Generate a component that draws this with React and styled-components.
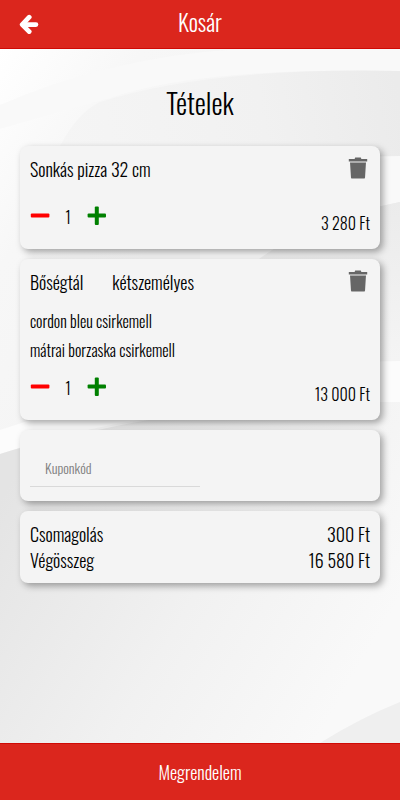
import React, { useState } from "react";
import styled, { createGlobalStyle } from "styled-components";

const GlobalStyle = createGlobalStyle`
  *, *::before, *::after { box-sizing: border-box; }
  body { margin: 0; background: #f2f2f2; }
  body, button, input { font-family: "Oswald", "Roboto Condensed", sans-serif; font-weight: 300; }
`;

const Screen = styled.div`
  position: relative;
  isolation: isolate;
  display: flex;
  flex-direction: column;
  min-height: 100vh;
  color: #000;
`;

const Backdrop = styled.svg`
  position: absolute;
  inset: 0;
  z-index: -1;
  width: 100%;
  height: 100%;
`;

const Header = styled.header`
  display: grid;
  grid-template-columns: 58px 1fr 58px;
  align-items: center;
  height: 49px;
  background: #db261d;
  border-bottom: 1px solid #cf0a05;
`;

const IconButton = styled.button`
  display: flex;
  align-items: center;
  justify-content: center;
  padding: 0;
  border: 0;
  background: none;
  color: ${p => p.$color};
  cursor: pointer;
`;

const ScreenTitle = styled.h1`
  margin: 0;
  padding-bottom: 4px;
  color: #fff;
  font-size: 23px;
  font-weight: 300;
  line-height: 32px;
  text-align: center;
`;

const Main = styled.main`
  flex: 1;
  display: flex;
  flex-direction: column;
  gap: 10px;
  padding: 30px 20px;
`;

const SectionTitle = styled.h2`
  margin: 0 0 10px;
  font-size: 28px;
  font-weight: 300;
  line-height: 47px;
  text-align: center;
`;

const Card = styled.section`
  padding: ${p => p.$padding || "10px"};
  border-radius: 8px;
  background: #f4f4f4;
  box-shadow: 3px 3px 7px rgba(0, 0, 0, 0.35);
`;

const ItemHead = styled.div`
  display: flex;
  justify-content: space-between;
  align-items: flex-start;
`;

const ItemName = styled.h3`
  display: flex;
  gap: 29px;
  margin: 0;
  font-size: 18px;
  font-weight: 300;
  line-height: 27px;
`;

const Extras = styled.ul`
  margin: 11px 0 5px;
  padding: 0;
  list-style: none;
  font-size: 16px;
  line-height: 29px;
`;

const ItemFoot = styled.div`
  display: flex;
  justify-content: space-between;
  align-items: flex-end;
  margin-top: ${p => (p.$spaced ? "16px" : "0")};
`;

const Stepper = styled.div`
  display: flex;
  align-items: center;
  height: 34px;
  margin-bottom: 6px;
`;

const Count = styled.output`
  width: 36px;
  padding-top: 2px;
  font-size: 16px;
  line-height: 24px;
  text-align: center;
`;

const Price = styled.span`
  font-size: 16px;
  line-height: 32px;
`;

const CouponInput = styled.input`
  display: block;
  width: 50%;
  height: 37px;
  padding: 0 15px 2px;
  border: 0;
  border-bottom: 1px solid #d9d9d9;
  border-radius: 0;
  background: none;
  font-size: 14px;
  outline: none;

  &::placeholder { color: #808080; opacity: 1; }
`;

const Totals = styled.dl`
  margin: 0;
`;

const TotalRow = styled.div`
  display: flex;
  justify-content: space-between;
  font-size: 18px;
  line-height: 26px;

  dt, dd { margin: 0; }
`;

const OrderButton = styled.button`
  height: 57px;
  padding: 0;
  border: 0;
  border-top: 1px solid #cf0a05;
  background: #db261d;
  color: #fff;
  font-size: 18px;
  cursor: pointer;
`;

const BackIcon = () => (
  <svg width="20" height="20" viewBox="0 0 20 20" fill="none" stroke="currentColor" aria-hidden="true">
    <path d="M10.2 3.2 3.2 10.600l7 7" strokeWidth="4.8" strokeLinecap="round" strokeLinejoin="round" />
    <path d="M4.5 10.600h12.500" strokeWidth="4.600" strokeLinecap="round" />
  </svg>
);

const MinusIcon = () => (
  <svg width="20" height="20" viewBox="0 0 20 20" fill="currentColor" aria-hidden="true">
    <rect x="0.8" y="7.6" width="18.6" height="4" rx="1" />
  </svg>
);

const PlusIcon = () => (
  <svg width="20" height="20" viewBox="0 0 20 20" fill="currentColor" aria-hidden="true">
    <rect x="1.6" y="7.6" width="18.4" height="4" rx="1" />
    <rect x="8.8" y="0.4" width="4" height="18.6" rx="1" />
  </svg>
);

const TrashIcon = () => (
  <svg width="20" height="24" viewBox="0 0 20 24" fill="currentColor" aria-hidden="true">
    <path d="M.8 3h5.8l.6-1.400h5.600l.6 1.400h5.800v2.400H.8z" />
    <path d="M2 6.600h16l-1 14.800q-.1 1.200-1.300 1.200H4.300q-1.200 0-1.300-1.200z" />
  </svg>
);

const TrashButton = styled(IconButton)`
  margin-right: 2px;
`;

const CartItem = ({ name, variant, extras, price }) => {
  const [count, setCount] = useState(1);
  const total = String(price * count).replace(/\B(?=(\d{3})+$)/g, " ");
  return (
    <Card>
      <ItemHead>
        <ItemName>
          <span>{name}</span>
          {variant && <span>{variant}</span>}
        </ItemName>
        <TrashButton $color="#666" type="button" aria-label="Törlés"><TrashIcon /></TrashButton>
      </ItemHead>
      {extras && <Extras>{extras.map(e => <li key={e}>{e}</li>)}</Extras>}
      <ItemFoot $spaced={!extras}>
        <Stepper>
          <IconButton $color="#f00" type="button" aria-label="Kevesebb" onClick={() => setCount(Math.max(1, count - 1))}>
            <MinusIcon />
          </IconButton>
          <Count>{count}</Count>
          <IconButton $color="#008000" type="button" aria-label="Több" onClick={() => setCount(count + 1)}>
            <PlusIcon />
          </IconButton>
        </Stepper>
        <Price>{total} Ft</Price>
      </ItemFoot>
    </Card>
  );
};

const Waves = () => (
  <Backdrop viewBox="0 0 400 800" preserveAspectRatio="none" aria-hidden="true">
    <defs>
      <linearGradient id="base" gradientUnits="userSpaceOnUse" x1="0" y1="50" x2="200" y2="180">
        <stop offset="0" stopColor="#fff" />
        <stop offset="0.5" stopColor="#f7f7f7" />
        <stop offset="1" stopColor="#f5f5f5" />
      </linearGradient>
      <linearGradient id="hill" gradientUnits="userSpaceOnUse" x1="60" y1="160" x2="400" y2="100">
        <stop offset="0" stopColor="#f5f5f5" />
        <stop offset="0.6" stopColor="#f1f1f1" />
        <stop offset="1" stopColor="#ebebeb" />
      </linearGradient>
      <linearGradient id="side" gradientUnits="userSpaceOnUse" x1="0" y1="200" x2="0" y2="360">
        <stop offset="0" stopColor="#ebebeb" />
        <stop offset="1" stopColor="#f4f4f4" />
      </linearGradient>
      <linearGradient id="floor" gradientUnits="userSpaceOnUse" x1="0" y1="500" x2="340" y2="700">
        <stop offset="0" stopColor="#e4e4e4" />
        <stop offset="0.55" stopColor="#f1f1f1" />
        <stop offset="1" stopColor="#f9f9f9" />
      </linearGradient>
    </defs>
    <rect width="400" height="800" fill="url(#base)" />
    <path d="M0 105Q110 57 240 49H400V71Q200 67 110 98Q50 114 0 129z" fill="#f9f9f9" />
    <path d="M60 146Q78 112 100 102Q210 67 400 71V250H60z" fill="url(#hill)" />
    <path d="M200 180Q300 156 400 156V202Q310 220 255 262H200z" fill="#f9f9f9" />
    <path d="M255 262Q310 220 400 202V362H255z" fill="url(#side)" />
    <path d="M0 430Q200 362 400 361V402Q160 400 0 454z" fill="#fcfcfc" />
    <path d="M0 454Q30 444 98 430Q220 402 400 402V800H0z" fill="url(#floor)" />
    <path d="M320 743Q360 718 400 702V800H320z" fill="#efefef" />
  </Backdrop>
);

export default function App() {
  return (
    <Screen>
      <GlobalStyle />
      <Waves />
      <Header>
        <IconButton $color="#fff" type="button" aria-label="Vissza"><BackIcon /></IconButton>
        <ScreenTitle>Kosár</ScreenTitle>
      </Header>
      <Main>
        <SectionTitle>Tételek</SectionTitle>
        <CartItem name="Sonkás pizza 32 cm" price={3280} />
        <CartItem
          name="Bőségtál"
          variant="kétszemélyes"
          extras={["cordon bleu csirkemell", "mátrai borzaska csirkemell"]}
          price={13000}
        />
        <Card $padding="20px 10px 14px">
          <CouponInput type="text" placeholder="Kuponkód" aria-label="Kuponkód" />
        </Card>
        <Card>
          <Totals>
            <TotalRow><dt>Csomagolás</dt><dd>300 Ft</dd></TotalRow>
            <TotalRow><dt>Végösszeg</dt><dd>16 580 Ft</dd></TotalRow>
          </Totals>
        </Card>
      </Main>
      <OrderButton type="button">Megrendelem</OrderButton>
    </Screen>
  );
}
